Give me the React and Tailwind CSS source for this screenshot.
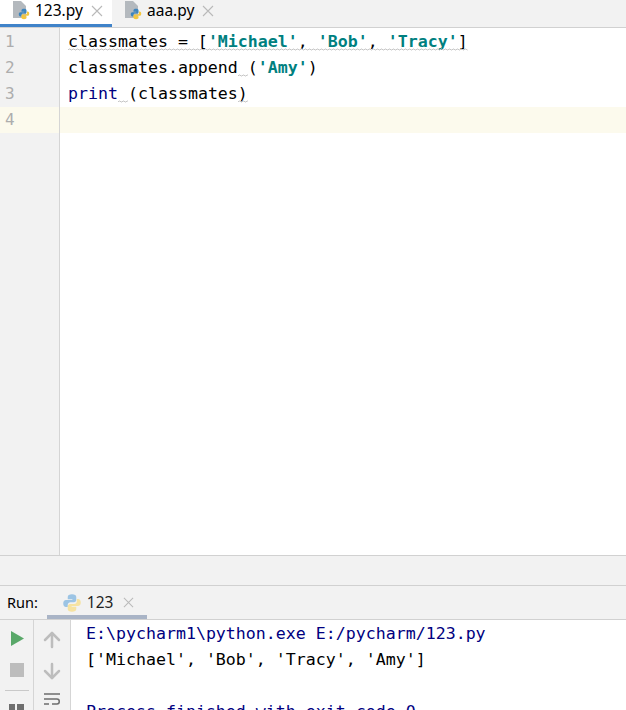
import { ArrowDown, ArrowUp } from 'lucide-react'

const mono = 'font-["DejaVu_Sans_Mono",monospace]'
const ui = 'font-["Noto_Sans","Open_Sans",sans-serif]'

function PythonMark({ className, faded }) {
  return (
    <svg viewBox="0 0 16 16" className={className}>
      <path
        d="M8 1C5.8 1 4.6 1.8 4.6 3.2V5H8.3V5.6H3.2C1.8 5.6 1 6.7 1 8.4C1 10.1 1.8 11.2 3.2 11.2H4.6V9.4C4.6 8.2 5.6 7.3 6.8 7.3H9.6C10.6 7.3 11.4 6.5 11.4 5.5V3.2C11.4 1.8 10.2 1 8 1Z"
        fill={faded ? '#9cc4e4' : '#3d85bd'}
      />
      <path
        d="M8 15C10.2 15 11.4 14.2 11.4 12.8V11H7.7V10.4H12.8C14.2 10.4 15 9.3 15 7.6C15 5.9 14.2 4.8 12.8 4.8H11.9V6.6C11.9 7.8 10.9 8.7 9.7 8.7H6.4C5.4 8.7 4.6 9.5 4.6 10.5V12.8C4.6 14.2 5.8 15 8 15Z"
        fill={faded ? '#f6e3a1' : '#f5c73d'}
      />
    </svg>
  )
}

function CloseIcon({ className }) {
  return (
    <svg viewBox="0 0 12 12" className={className} fill="none" stroke="#b9b9b9" strokeWidth="1.1">
      <path d="M1 1L11 11M11 1L1 11" />
    </svg>
  )
}

function FileIcon() {
  return (
    <span className="relative w-[16px] h-[19px] block">
      <svg viewBox="0 0 13 17" className="absolute left-0 top-0 w-[13px] h-[17px]">
        <path d="M0 0H8L13 5V17H0Z" fill="#b4b9be" />
      </svg>
      <PythonMark className="absolute left-[5px] top-[7px] w-[12px] h-[12px]" />
    </span>
  )
}

function Tab({ name, active }) {
  return (
    <div
      className={`flex items-center h-[27px] pb-[3px] border-b-[3px] ${
        active ? 'w-[112px] pl-[13px] border-[#4083c9]' : 'w-[108px] pl-[13px] border-transparent'
      }`}
    >
      <FileIcon />
      <span className={`${ui} ml-[6px] text-[15.5px] leading-none text-black`}>{name}</span>
      <CloseIcon className="ml-[8px] w-[12px] h-[12px]" />
    </div>
  )
}

const S = ({ children }) => <span className="text-[#008080] font-bold">{children}</span>

// weak warning squiggle, drawn over the code line
function Squiggle({ children, id }) {
  return (
    <span className="relative inline-block">
      {children}
      <svg className="absolute left-0 top-[19px] w-full h-[3px]">
        <pattern id={id} width="4" height="3" patternUnits="userSpaceOnUse">
          <path d="M0 2L1 1L2 1L3 2L4 2" fill="none" stroke="#c6c6c6" strokeWidth="1" />
        </pattern>
        <rect width="100%" height="3" fill={`url(#${id})`} />
      </svg>
    </span>
  )
}

export default function App() {
  return (
    <div className="w-[626px] h-[710px] overflow-hidden bg-white flex flex-col">
      <div className="flex h-[28px] bg-[#f2f2f2] border-b border-[#d1d1d1]">
        <div className="flex bg-white">
          <Tab name="123.py" active />
        </div>
        <Tab name="aaa.py" />
      </div>

      <div className="flex h-[527px]">
        <div className={`${mono} w-[60px] shrink-0 bg-[#f2f2f2] border-r border-[#d5d5d5] pt-[1px] text-[16px] leading-[26px] text-[#adadad]`}>
          <div className="pl-[5px]">1</div>
          <div className="pl-[5px]">2</div>
          <div className="pl-[5px]">3</div>
          <div className="pl-[5px] bg-[#fcfaed]">4</div>
        </div>
        <div className={`${mono} flex-1 pt-[1px] text-[16.6px] leading-[26px] text-black whitespace-pre`}>
          <div className="pl-[8px]">
            <Squiggle id="sq1">classmates = [<S>'Michael'</S>, <S>'Bob'</S>, <S>'Tracy'</S>]</Squiggle>
          </div>
          <div className="pl-[8px]">
            classmates.append<Squiggle id="sq2"> </Squiggle>(<S>'Amy'</S>)
          </div>
          <div className="pl-[8px]">
            <span className="text-[#000080]">print</span>
            <Squiggle id="sq3"> </Squiggle>(classmates<Squiggle id="sq4">)</Squiggle>
          </div>
          <div className="h-[26px] bg-[#fcfaed]" />
        </div>
      </div>

      <div className="h-[31px] bg-[#f2f2f2] border-y border-[#d1d1d1] box-border" />

      <div className="flex items-center h-[34px] bg-[#f2f2f2] border-b border-[#d1d1d1]">
        <span className={`${ui} ml-[7px] text-[14.5px] text-black`}>Run:</span>
        <div className="relative flex items-center h-full w-[100px] ml-[9px] pl-[15px]">
          <PythonMark className="w-[20px] h-[20px]" faded />
          <span className={`${ui} ml-[5px] text-[15.5px] text-[#1f1f1f]`}>123</span>
          <CloseIcon className="ml-[10px] w-[11px] h-[11px]" />
          <div className="absolute left-0 right-0 bottom-0 h-[4px] bg-[#a9b4c6]" />
        </div>
      </div>

      <div className="flex flex-1 min-h-0">
        <div className="w-[34px] shrink-0 bg-[#f2f2f2] border-r border-[#d5d5d5] flex flex-col items-center">
          <svg viewBox="0 0 14 16" className="mt-[11px] ml-[1px] w-[13px] h-[15px] shrink-0">
            <path d="M0 0L14 8L0 16Z" fill="#59a869" />
          </svg>
          <div className="mt-[17px] w-[14px] h-[14px] shrink-0 bg-[#bdbdbd]" />
          <div className="mt-[13px] w-[24px] h-px shrink-0 bg-[#c9c9c9]" />
          <svg viewBox="0 0 15 13" className="mt-[13px] w-[15px] h-[13px] shrink-0">
            <path d="M0 0H6V6H0ZM8 0H15V6H8Z" fill="#6e6e6e" />
          </svg>
        </div>
        <div className="w-[37px] shrink-0 bg-[#f2f2f2] border-r border-[#d5d5d5] flex flex-col items-center">
          <ArrowUp className="mt-[8px] w-[24px] h-[24px] shrink-0 text-[#bdbdbd]" strokeWidth={2.5} />
          <ArrowDown className="mt-[7px] w-[24px] h-[24px] shrink-0 text-[#bdbdbd]" strokeWidth={2.5} />
          <svg viewBox="0 0 16 14" className="mt-[10px] w-[16px] h-[14px] shrink-0" fill="none" stroke="#6e6e6e" strokeWidth="1.5">
            <path d="M0 1H16M0 6H13C16 6 16 11 13 11H8M0 11H5" />
          </svg>
        </div>
        <div className={`${mono} flex-1 pt-[1px] pl-[15px] text-[16.6px] leading-[26px] text-black whitespace-pre`}>
          <div className="text-[#000080]">E:\pycharm1\python.exe E:/pycharm/123.py</div>
          <div>['Michael', 'Bob', 'Tracy', 'Amy']</div>
          <div>&nbsp;</div>
          <div className="text-[#000080]">Process finished with exit code 0</div>
        </div>
      </div>
    </div>
  )
}
